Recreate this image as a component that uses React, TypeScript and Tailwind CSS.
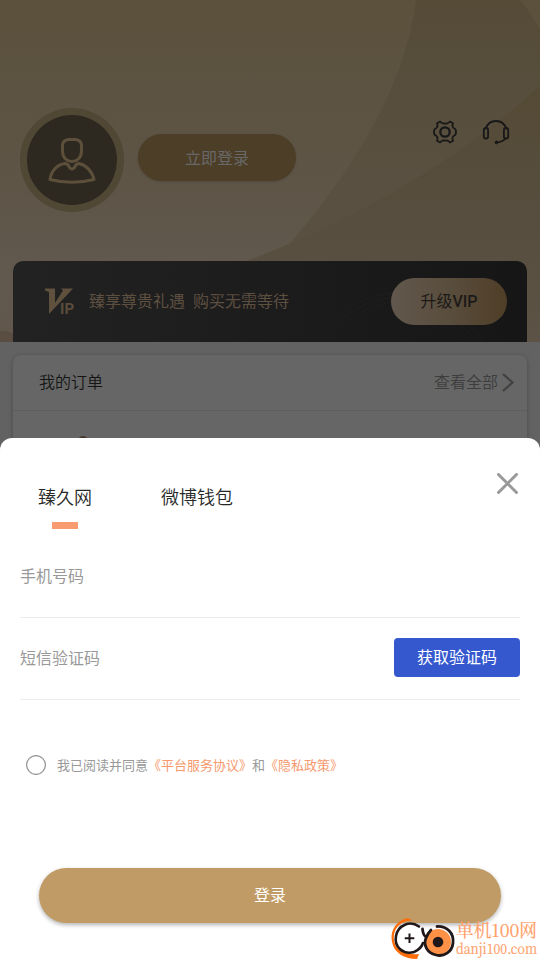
import React from "react";

function HeaderBackdrop() {
  return (
    <svg className="absolute inset-0" width="540" height="342" viewBox="0 0 540 342" aria-hidden="true">
      <defs>
        <linearGradient id="sand" x1="0" y1="0" x2="0" y2="1">
          <stop offset="0" stopColor="#5b513c" />
          <stop offset="0.45" stopColor="#5d5445" />
          <stop offset="0.78" stopColor="#61584e" />
          <stop offset="1" stopColor="#61574d" />
        </linearGradient>
        <linearGradient id="sandMid" x1="0" y1="0" x2="0" y2="1">
          <stop offset="0" stopColor="#554b37" />
          <stop offset="0.5" stopColor="#595041" />
          <stop offset="1" stopColor="#594f41" />
        </linearGradient>
        <linearGradient id="sandLow" x1="0" y1="0" x2="0" y2="1">
          <stop offset="0" stopColor="#544a35" />
          <stop offset="0.55" stopColor="#584e40" />
          <stop offset="0.75" stopColor="#595042" />
          <stop offset="1" stopColor="#5c5346" />
        </linearGradient>
      </defs>
      <rect width="540" height="342" fill="url(#sand)" />
      <path d="M416 0C405 83 361 165 268 269V342H540V0Z" fill="url(#sandMid)" />
      <path d="M540 86C455 162 356 222 222 270V342H540Z" fill="url(#sandLow)" />
      <path d="M520 0Q530 12 540 30V0Z" fill="#5b513c" />
      <path d="M0 331Q12 329 20 342H0Z" fill="#594e41" />
    </svg>
  );
}

function Avatar() {
  return (
    <div className="flex h-[104px] w-[104px] items-center justify-center rounded-full bg-[#504835]">
      <div className="flex h-[90px] w-[90px] items-center justify-center rounded-full bg-[#2d2820]">
        <svg className="mt-[2px]" width="48" height="48" viewBox="0 0 48 48" fill="none" stroke="#5c503a" strokeWidth="3" strokeLinejoin="round">
          <path d="M20.500 2.500H27.500Q33.500 3 33.500 9V14C33.500 28 14.500 28 14.500 14V9Q14.500 3 20.500 2.500Z" />
          <path d="M17 26.500C9 27.500 3 34 2 42.500Q24 48 46 42.500C44 34 38 28 31 26.500Q28 26.500 26.500 30.500Q24 33.500 21.500 30.500Q20 26.500 17 26.500Z" />
        </svg>
      </div>
    </div>
  );
}

function GearIcon() {
  return (
    <svg width="26" height="24" viewBox="0 0 26 24" fill="none" stroke="#181818" strokeWidth="1.800" strokeLinejoin="round">
      <path d="M8 1.500Q10.500 4.200 13 3.400Q15.500 4.200 18 1.500L21 3.200Q19.500 7 22.300 8.500Q24 9 24 12Q24 15 22.300 15.500Q19.500 17 21 20.800L18 22.500Q15.500 19.800 13 20.600Q10.500 19.800 8 22.500L5 20.800Q6.500 17 3.700 15.500Q2 15 2 12Q2 9 3.700 8.500Q6.500 7 5 3.200Z" />
      <circle cx="13" cy="12" r="4.700" strokeWidth="2.300" />
    </svg>
  );
}

function HeadsetIcon() {
  return (
    <svg width="28" height="26" viewBox="0 0 28 26" fill="none" stroke="#181818" strokeWidth="1.800" strokeLinecap="round">
      <path d="M3.800 8.500C5.500 3.500 9 1 14 1S22.500 3.500 24.200 8.500" />
      <rect x="1.800" y="8" width="4.300" height="10.500" rx="2.100" />
      <rect x="21.900" y="8" width="4.300" height="10.500" rx="2.100" />
      <path d="M23.500 18.500Q20 22.500 14.500 22.200" />
      <circle cx="14.500" cy="22.400" r="1.400" fill="#181818" strokeWidth="1" />
    </svg>
  );
}

function VipMark() {
  return (
    <div className="relative h-7 w-[30px]" role="img" aria-label="VIP">
      <svg width="30" height="28" viewBox="0 0 30 28">
        <path d="M0 0.500H10V15L18 2.500L16 0.500H28L4 26V4L0 2.500Z" fill="#60513f" />
      </svg>
      <span className="absolute top-[13px] left-[15px] font-['Roboto',sans-serif] text-[15px] leading-4 font-bold text-[#5b4c3c]">IP</span>
    </div>
  );
}

function VipBanner() {
  return (
    <section className="relative mx-[13px] mt-[49px] flex h-[81px] items-center overflow-hidden rounded-t-[10px] bg-gradient-to-r from-[#222222] to-[#161616] pr-5 pl-8">
      <svg className="absolute inset-0" width="514" height="81" viewBox="0 0 514 81" fill="none" stroke="#222222" strokeWidth="1" aria-hidden="true">
        <path d="M135 0Q215 80 300 0M145 0Q215 68 290 0M155 0Q215 56 280 0" opacity=".4" />
        <path d="M296 81Q383 -17 472 81M304 81Q383 -8 464 81M312 81Q383 2 456 81" opacity=".55" />
      </svg>
      <VipMark />
      <p className="-mt-[3px] ml-[14px] flex gap-2 text-base leading-6 text-[#5e5040]">
        <span>臻享尊贵礼遇</span>
        <span>购买无需等待</span>
      </p>
      <button className="relative ml-auto h-[47px] w-[116px] rounded-full bg-gradient-to-r from-[#61574c] via-[#594d3d] to-[#4f3e27] pb-[2px] text-base text-[#1c1a18]">
        升级<span className="font-['Roboto',sans-serif] font-medium">VIP</span>
      </button>
    </section>
  );
}

function ProfileHeader() {
  return (
    <header className="relative h-[342px] overflow-hidden">
      <HeaderBackdrop />
      <div className="relative flex pt-[108px] pr-[30px] pl-5">
        <Avatar />
        <button className="mt-[26px] ml-[14px] h-[47px] w-[158px] rounded-full bg-[#4d3e27] pb-[2px] text-base text-[#686868] shadow-sm">立即登录</button>
        <div className="mt-3 ml-auto flex items-start gap-[24px]">
          <GearIcon />
          <HeadsetIcon />
        </div>
      </div>
      <VipBanner />
    </header>
  );
}

function OrdersCard() {
  return (
    <section className="h-[96px] overflow-hidden px-[13px] pt-[13px]">
      <div className="h-[100px] rounded-t-[8px] bg-[#666666] shadow-[0_1px_4px_rgba(0,0,0,0.25)]">
        <div className="flex h-14 items-center border-b border-[#5e5e5e] pr-3 pl-[26px] text-base">
          <h2 className="-mt-[3px] font-[350] text-[#151515]">我的订单</h2>
          <span className="-mt-[3px] ml-auto font-[350] text-[#3d3d3d]">查看全部</span>
          <svg className="ml-[3px]" width="14" height="20" viewBox="0 0 14 20" fill="none" stroke="#414141" strokeWidth="2.200">
            <path d="M2 1L11.500 9.500L2 18" />
          </svg>
        </div>
        <div className="mt-[25px] ml-[65px] h-3 w-[10px] rounded-full bg-[#44382d]" />
      </div>
    </section>
  );
}

function Watermark() {
  return (
    <div className="absolute right-0 bottom-0 flex h-[43px] w-[150px] items-start">
      <svg width="66" height="43" viewBox="0 0 66 43" fill="none" aria-hidden="true">
        <path d="M22 4Q20 0 14 2C4 7 0 15 2 25C4 35 13 42 27 42L29 37C18 38 8 35 5 27C2 18 5 10 12 6Q17 3 22 4Z" fill="#ff6d0b" />
        <circle cx="20" cy="21" r="15.500" fill="#fff" />
        <path d="M29 9.500C20 3 8 8 6 19C4 30 13 38 24 35Q31 32 33 26" stroke="#201719" strokeWidth="2.600" strokeLinecap="round" />
        <path d="M19.500 16.500V26M14.700 21.200H24.300" stroke="#201719" strokeWidth="2" />
        <circle cx="48" cy="25" r="13" fill="#ff9147" />
        <path d="M47 9.500C57 9 64 16 63 26C62 35 54 40 46 38C37 36 33 28 36 21Q38 16 41 13M32.500 12Q33 18 36 20" stroke="#201719" strokeWidth="2.800" strokeLinecap="round" />
        <circle cx="48" cy="25" r="5.300" fill="#201719" />
      </svg>
      <svg width="84" height="43" viewBox="0 0 84 43" fill="#ff9d65" stroke="#ff9d65" strokeWidth="0.200" fontFamily="'Noto Serif CJK SC', 'Noto Sans CJK SC', serif">
        <text x="0" y="20" fontSize="18" textLength="81" lengthAdjust="spacingAndGlyphs">单机100网</text>
        <text x="0" y="37" fontSize="14" textLength="81" lengthAdjust="spacingAndGlyphs">danji100.com</text>
      </svg>
    </div>
  );
}

function LoginSheet() {
  return (
    <section className="relative h-[522px] rounded-t-[12px] bg-white px-5">
      <div className="flex justify-between pt-[35px]">
        <nav className="ml-[18px] flex gap-[69px] pt-[9px] text-lg leading-7 font-[350] text-[#282828]">
          <div className="flex flex-col items-center">
            <span>臻久网</span>
            <span className="mt-[12px] h-[7px] w-[26px] bg-[#f89b70]" />
          </div>
          <span>微博钱包</span>
        </nav>
        <button className="mr-[2px] h-[21px] w-[21px]" aria-label="关闭">
          <svg width="21" height="21" viewBox="0 0 21 21" stroke="#999999" strokeWidth="3" strokeLinecap="round">
            <path d="M1.500 1.500L19.500 19.500M19.500 1.500L1.500 19.500" />
          </svg>
        </button>
      </div>
      <div className="mt-[7px] flex h-[82px] items-center border-b border-[#ebebeb] pb-[3px] text-base text-[#999999]">手机号码</div>
      <div className="flex h-[82px] items-center justify-between border-b border-[#ebebeb] pb-[2px] text-base text-[#999999]">
        <span className="-mt-[2px]">短信验证码</span>
        <button className="h-[39px] w-[126px] rounded-[4px] bg-[#3558cf] pb-[3px] text-white">获取验证码</button>
      </div>
      <div className="mt-[55px] ml-[6px] flex h-5 items-center text-[13px]">
        <svg width="20" height="20" viewBox="0 0 20 20" fill="none" stroke="#999999" strokeWidth="1.300">
          <circle cx="10" cy="10" r="9.400" />
        </svg>
        <p className="ml-[11px] whitespace-nowrap text-[#999999]">
          我已阅读并同意<span className="text-[#f6996d]">《平台服务协议》</span>和<span className="text-[#f6996d]">《隐私政策》</span>
        </p>
      </div>
      <button className="mx-[19px] mt-[93px] h-[55px] w-[462px] rounded-full bg-[#c09b65] pb-[3px] text-base text-white shadow-[0_2px_4px_rgba(0,0,0,0.3)]">登录</button>
      <Watermark />
    </section>
  );
}

export default function App() {
  return (
    <main className="h-[960px] w-[540px] overflow-hidden bg-[#626262] font-['Noto_Sans_CJK_SC',sans-serif]">
      <ProfileHeader />
      <OrdersCard />
      <LoginSheet />
    </main>
  );
}
